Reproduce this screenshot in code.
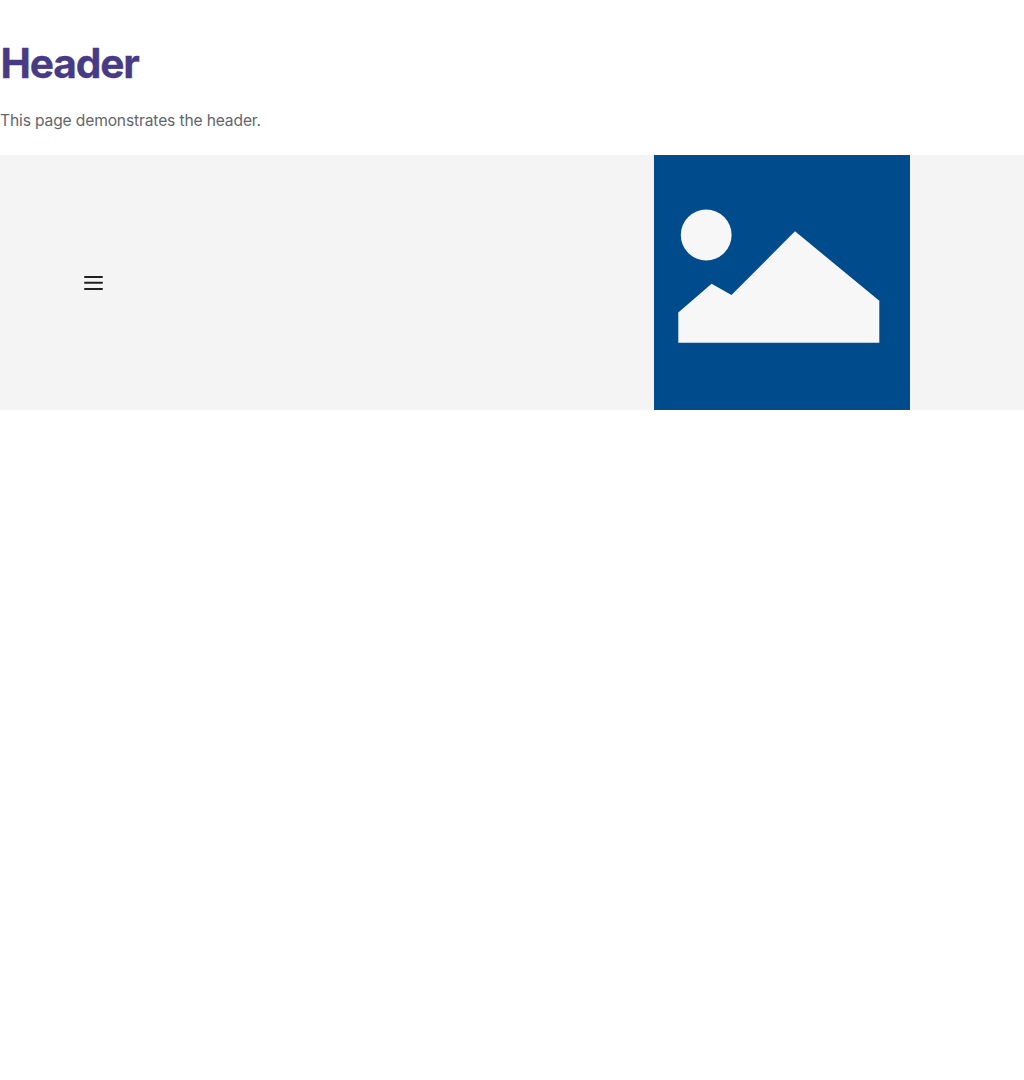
<main>
  <h1>Header</h1>
  <p>This page demonstrates the header.</p>
  <header>
    <button aria-label="Menu">
      <svg width="19" height="16" viewBox="0 0 19 16"><path d="M1 2h17M1 7.8h17M1 14h17" /></svg>
    </button>
    <svg class="logo" width="256" height="255" viewBox="0 0 256 255">
      <circle cx="52.2" cy="80" r="25.4" />
      <path d="M24.3 187.8V157.5L57.6 128.8L77.5 140L141 76.3L225.3 145.8V187.8z" />
    </svg>
  </header>
</main>

<style>
  :global(body) { margin: 0; background: #fff; }
  main { font-family: Inter, sans-serif; }
  h1 {
    margin: 0;
    padding: 39px 0 0 0.5px;
    font-size: 40.7px;
    line-height: 50px;
    letter-spacing: -1.15px;
    font-weight: 700;
    -webkit-text-stroke: 0.3px #483b85;
    color: #483b85;
  }
  p {
    margin: 20px 0 22px;
    font-size: 15.6px;
    line-height: 24px;
    letter-spacing: -0.14px;
    color: #63666a;
  }
  header {
    height: 255px;
    display: flex;
    align-items: center;
    justify-content: space-between;
    box-sizing: border-box;
    padding: 0 114px 0 84px;
    background: #f4f4f4;
  }
  button { display: flex; padding: 0; border: 0; background: none; }
  button svg { fill: none; stroke: #211f20; stroke-width: 2; stroke-linecap: round; }
  .logo { background: #004b8b; fill: #f7f7f7; }
</style>
